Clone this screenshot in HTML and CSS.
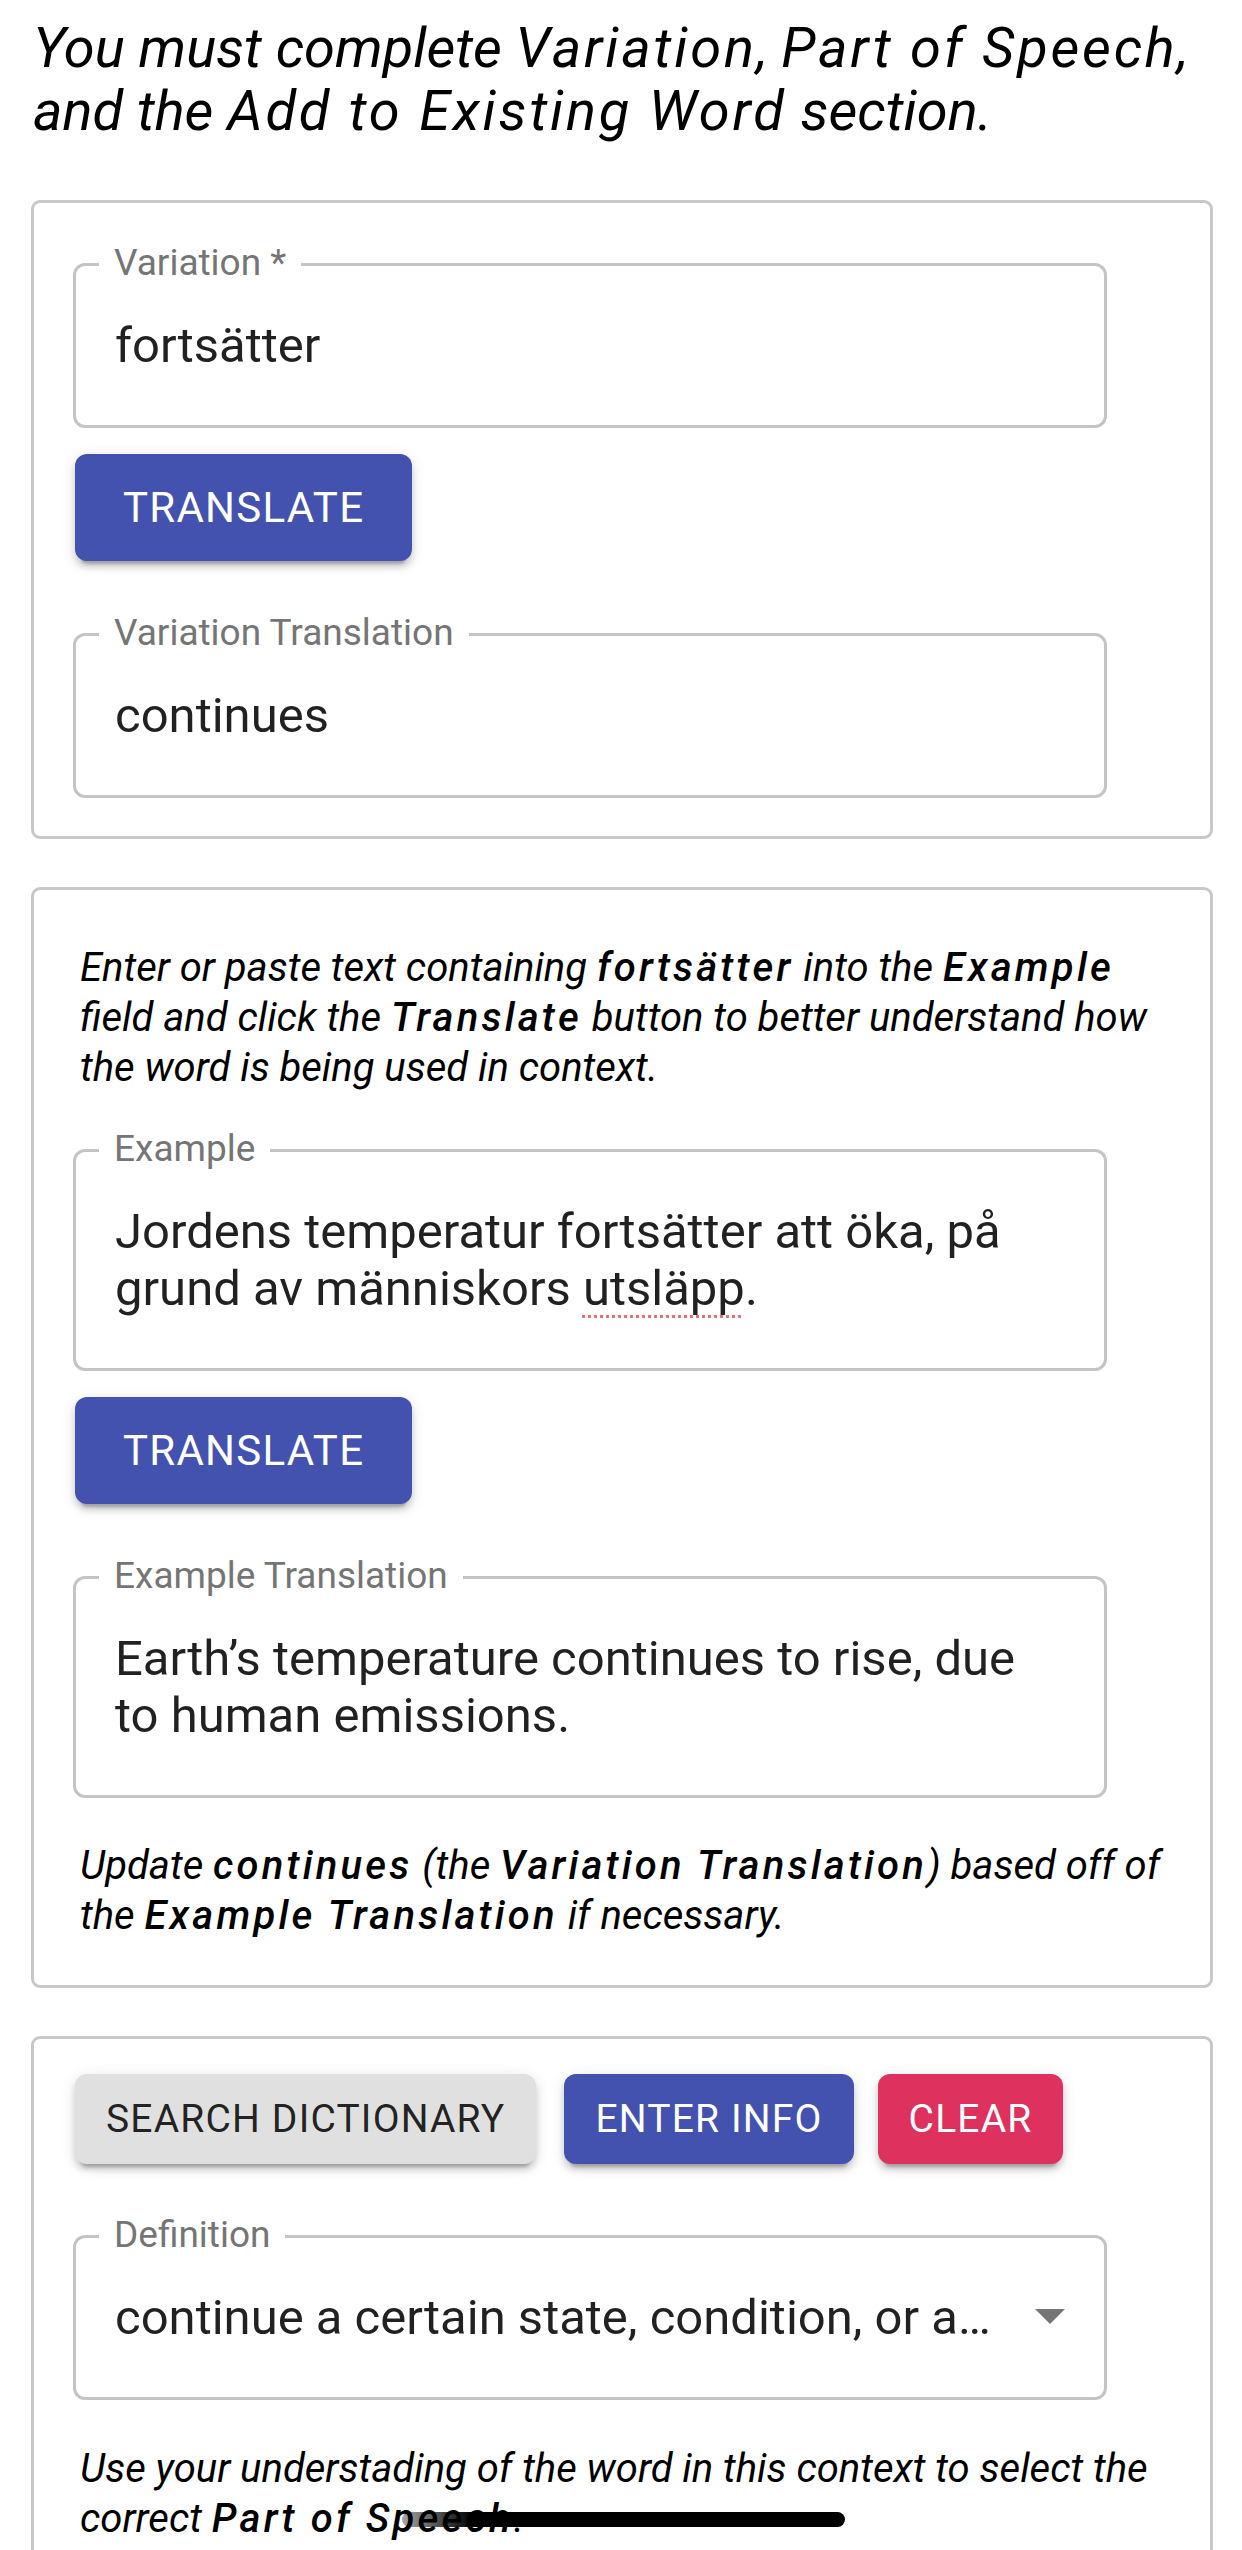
FILE: index.html
```html
<!DOCTYPE html>
<html lang="en">
<head>
<meta charset="utf-8">
<title>Add variation</title>
<link rel="stylesheet" href="styles.css">
</head>
<body>
<main class="page">
  <h1 class="intro">You must complete <em class="key">Variation</em>, <em class="key">Part of Speech</em>, and the <em class="key">Add to Existing Word</em> section.</h1>

  <section class="card card-variation">
    <div class="field">
      <span class="field-label">Variation *</span>
      <div class="field-value">fortsätter</div>
    </div>
    <div class="actions actions-single">
      <button class="btn btn-large btn-primary" type="button">Translate</button>
    </div>
    <div class="field field-gap">
      <span class="field-label">Variation Translation</span>
      <div class="field-value">continues</div>
    </div>
  </section>

  <section class="card card-example">
    <p class="note">Enter or paste text containing <strong>fortsätter</strong> into the <strong>Example</strong> field and click the <strong>Translate</strong> button to better understand how the word is being used in context.</p>
    <div class="field field-after-note">
      <span class="field-label">Example</span>
      <div class="field-value">Jordens temperatur fortsätter att öka, på<br>grund av människors <span class="misspelled">utsläpp</span>.</div>
    </div>
    <div class="actions actions-single">
      <button class="btn btn-large btn-primary" type="button">Translate</button>
    </div>
    <div class="field field-gap">
      <span class="field-label">Example Translation</span>
      <div class="field-value">Earth’s temperature continues to rise, due<br>to human emissions.</div>
    </div>
    <p class="note note-after-field">Update <strong>continues</strong> (the <strong>Variation Translation</strong>) based off of the <strong>Example Translation</strong> if necessary.</p>
  </section>

  <section class="card card-definition">
    <div class="actions actions-row">
      <button class="btn btn-small btn-grey" type="button">Search Dictionary</button>
      <button class="btn btn-small btn-primary btn-enter" type="button">Enter Info</button>
      <button class="btn btn-small btn-danger" type="button">Clear</button>
    </div>
    <div class="field field-select">
      <span class="field-label">Definition</span>
      <div class="field-value">continue a certain state, condition, or activity</div>
      <span class="select-arrow"></span>
    </div>
    <p class="note note-after-select">Use your understading of the word in this context to select the correct <strong>Part of Speech</strong>.</p>
  </section>
</main>
<div class="home-indicator"></div>
</body>
</html>
```

FILE: styles.css
```css
* { box-sizing: border-box; }

html, body {
  margin: 0;
  padding: 0;
  background: #ffffff;
}

body {
  width: 1242px;
  height: 2550px;
  overflow: hidden;
  position: relative;
  font-family: Roboto, "Noto Sans", "Liberation Sans", sans-serif;
  color: rgba(0, 0, 0, 0.87);
}

.page {
  padding: 17px 29px 0 31px;
}

.intro {
  margin: 0 0 57px 2px;
  font-size: 56px;
  line-height: 63px;
  font-style: italic;
  font-weight: 400;
  color: #000;
}

.intro .key {
  font-style: italic;
  letter-spacing: 0.05em;
}

.card {
  border: 3px solid #c8c8c8;
  border-radius: 9px;
  padding: 0 46px 0 39px;
  margin-bottom: 48px;
}

.card-variation { padding-top: 60px; padding-bottom: 38px; }
.card-example { padding-top: 53px; padding-bottom: 44px; }
.card-definition { padding-top: 35px; padding-bottom: 200px; }

.field {
  position: relative;
  width: 1034px;
  border: 3px solid #c4c4c4;
  border-radius: 12px;
  padding: 51px 39px;
  font-size: 49px;
  line-height: 57px;
  color: rgba(0, 0, 0, 0.87);
}

.field-gap { margin-top: 72px; }
.field-after-note { margin-top: 56px; }

.field-label {
  position: absolute;
  left: 23px;
  top: -22px;
  padding: 0 15px;
  background: #ffffff;
  font-size: 37px;
  line-height: 37px;
  color: #757575;
  white-space: nowrap;
}

.misspelled {
  text-decoration: underline dotted #e57373;
  text-decoration-thickness: 3px;
  text-underline-offset: 10px;
}

.actions {
  display: flex;
  align-items: center;
}

.actions-single { margin-top: 26px; }

.btn {
  font-family: inherit;
  border: 0;
  border-radius: 12px;
  text-transform: uppercase;
  font-weight: 400;
  letter-spacing: 0.03em;
  display: inline-flex;
  align-items: center;
  justify-content: center;
  box-shadow: 0 9px 3px -6px rgba(0, 0, 0, 0.2), 0 6px 6px 0 rgba(0, 0, 0, 0.14), 0 3px 15px 0 rgba(0, 0, 0, 0.12);
  margin-left: 2px;
}

.btn-large {
  height: 107px;
  padding: 0 48px;
  font-size: 42px;
}

.btn-small {
  height: 90px;
  padding: 0 31px;
  font-size: 39px;
}

.btn-primary { background: #4351af; color: #ffffff; }
.btn-grey { background: #e0e0e0; color: rgba(0, 0, 0, 0.87); }
.btn-danger { background: #de315d; color: #ffffff; }

.btn-enter { margin-left: 28px; margin-right: 24px; }
.btn-danger { margin-left: 0; }

.field-select {
  margin-top: 71px;
  padding-right: 110px;
}

.field-select .field-value {
  white-space: nowrap;
  overflow: hidden;
  text-overflow: ellipsis;
}

.select-arrow {
  position: absolute;
  right: 39px;
  top: 71px;
  width: 0;
  height: 0;
  border-left: 15px solid transparent;
  border-right: 15px solid transparent;
  border-top: 15px solid #757575;
}

.note {
  margin: 0 0 0 7px;
  font-size: 40px;
  line-height: 50px;
  font-style: italic;
  color: #000;
}

.note strong {
  font-weight: 500;
  letter-spacing: 0.08em;
}

.note-after-field { margin-top: 43px; }
.note-after-select { margin-top: 44px; }

.home-indicator {
  position: absolute;
  left: 402px;
  top: 2512px;
  width: 443px;
  height: 15px;
  border-radius: 8px;
  background: linear-gradient(to right, rgba(0, 0, 0, 0.35) 0, #000 70px);
}
```
